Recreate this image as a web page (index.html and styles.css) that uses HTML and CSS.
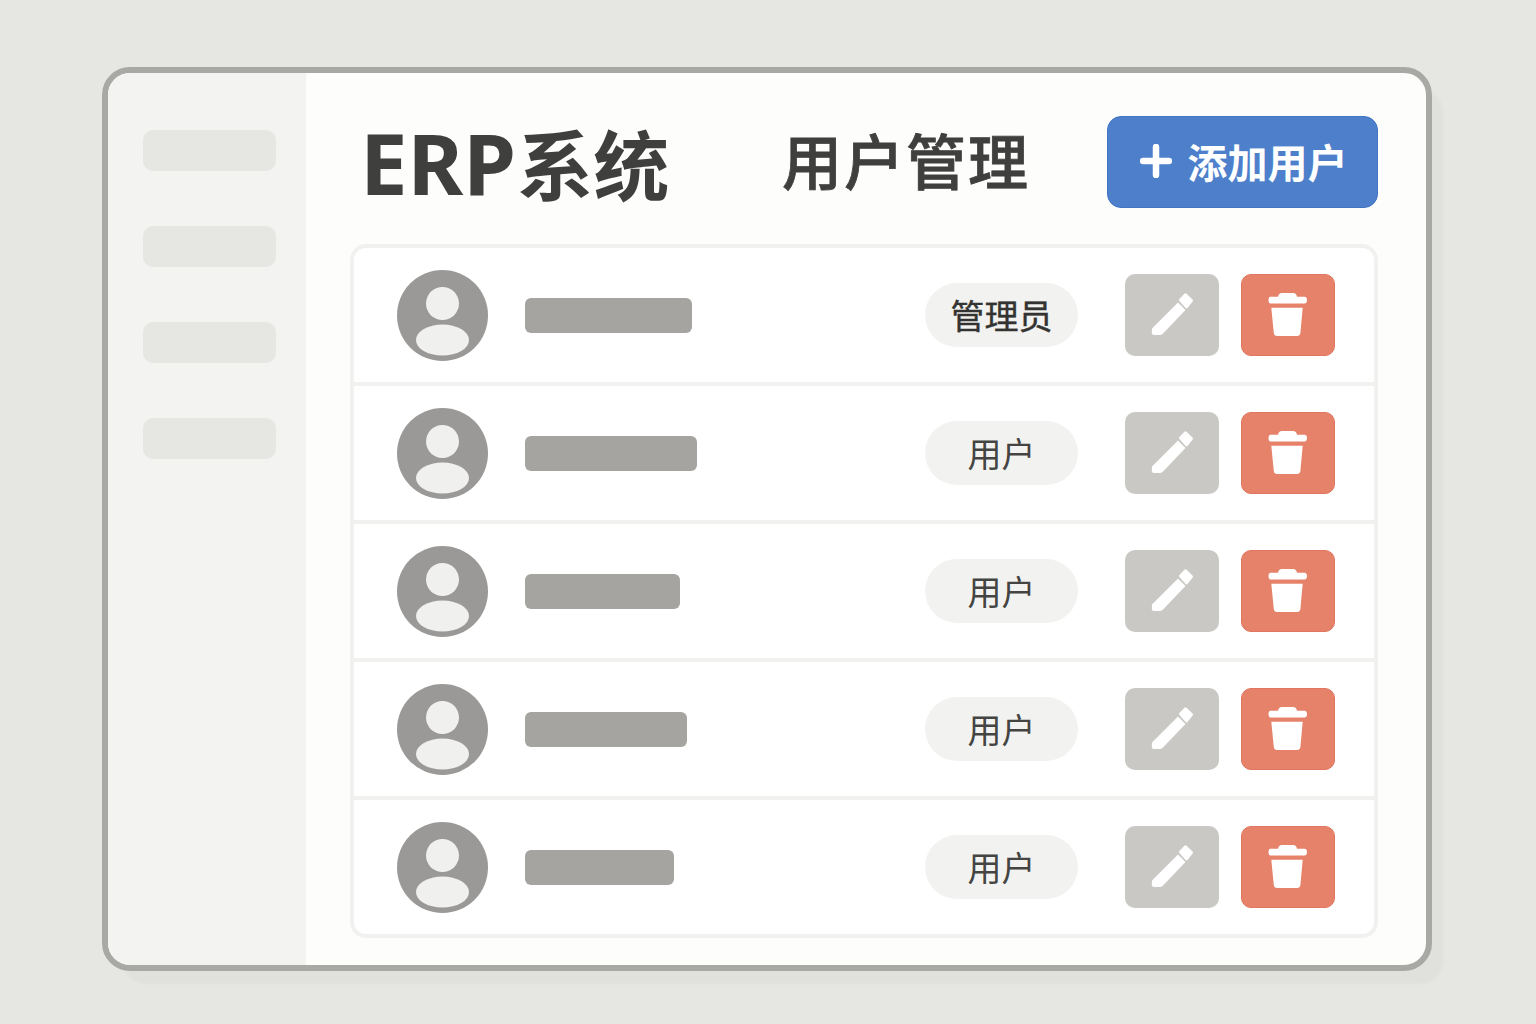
FILE: index.html
```html
<!DOCTYPE html>
<html lang="zh-CN">
<head>
    <meta charset="UTF-8">
    <meta name="viewport" content="width=device-width, initial-scale=1.0">
    <title>ERP系统 用户管理</title>
    <link rel="stylesheet" href="styles.css">
</head>
<body>

    <svg class="sprite" xmlns="http://www.w3.org/2000/svg">
        <symbol id="icon-avatar" viewBox="0 0 91 91">
            <circle cx="45.5" cy="45.5" r="45.5" fill="#9a9997"/>
            <circle cx="45.5" cy="33.5" r="16.5" fill="#f0f0ee"/>
            <ellipse cx="45.5" cy="70" rx="26.5" ry="15.5" fill="#f0f0ee"/>
        </symbol>
        <symbol id="icon-pencil" viewBox="0 0 48 48">
            <path d="M4 37.5 L30 11.5 L37.5 19 L15.5 42 Q14 43.8 12 44 L6 44 Q3.8 44 3.8 42 Z" fill="#fff"/>
            <path d="M32.5 9 L37.5 3.8 L43.5 9.5 L38.5 15.8 Z" fill="#fff" stroke="#fff" stroke-width="3" stroke-linejoin="round"/>
        </symbol>
        <symbol id="icon-trash" viewBox="0 0 48 48">
            <path d="M14 5.8 Q14.5 2 18 2 L29 2 Q32.5 2 33 5.8 L40.5 5.8 Q43 6 43 9 Q43 12.4 40.5 12.4 L6.5 12.4 Q4.5 12.4 4.5 9 Q4.5 6 6.5 5.8 Z" fill="#fff"/>
            <path d="M7.3 16.7 L38.7 16.7 L36.4 42 Q36 45 33 45 L13 45 Q10.2 45 9.8 42 Z" fill="#fff"/>
        </symbol>
    </svg>

    <div class="window">
        <aside class="sidebar">
            <div class="nav-item"></div>
            <div class="nav-item"></div>
            <div class="nav-item"></div>
            <div class="nav-item"></div>
        </aside>

        <main class="content">
            <header class="topbar">
                <h1 class="app-title"><span class="app-latin">ERP</span>系统</h1>
                <h2 class="page-title">用户管理</h2>
                <button class="add-btn">
                    <svg class="plus" viewBox="0 0 32 34"><path d="M16 3 V31 M3 17 H29" stroke="#fff" stroke-width="6.5" stroke-linecap="round"/></svg>
                    <span>添加用户</span>
                </button>
            </header>

            <section class="user-list">
                <div class="user-row">
                    <svg class="avatar"><use href="#icon-avatar"/></svg>
                    <div class="user-name" style="width: 167px"></div>
                    <span class="role role-admin">管理员</span>
                    <button class="icon-btn edit"><svg><use href="#icon-pencil"/></svg></button>
                    <button class="icon-btn del"><svg><use href="#icon-trash"/></svg></button>
                </div>
                <div class="user-row">
                    <svg class="avatar"><use href="#icon-avatar"/></svg>
                    <div class="user-name" style="width: 172px"></div>
                    <span class="role">用户</span>
                    <button class="icon-btn edit"><svg><use href="#icon-pencil"/></svg></button>
                    <button class="icon-btn del"><svg><use href="#icon-trash"/></svg></button>
                </div>
                <div class="user-row">
                    <svg class="avatar"><use href="#icon-avatar"/></svg>
                    <div class="user-name" style="width: 155px"></div>
                    <span class="role">用户</span>
                    <button class="icon-btn edit"><svg><use href="#icon-pencil"/></svg></button>
                    <button class="icon-btn del"><svg><use href="#icon-trash"/></svg></button>
                </div>
                <div class="user-row">
                    <svg class="avatar"><use href="#icon-avatar"/></svg>
                    <div class="user-name" style="width: 162px"></div>
                    <span class="role">用户</span>
                    <button class="icon-btn edit"><svg><use href="#icon-pencil"/></svg></button>
                    <button class="icon-btn del"><svg><use href="#icon-trash"/></svg></button>
                </div>
                <div class="user-row">
                    <svg class="avatar"><use href="#icon-avatar"/></svg>
                    <div class="user-name" style="width: 149px"></div>
                    <span class="role">用户</span>
                    <button class="icon-btn edit"><svg><use href="#icon-pencil"/></svg></button>
                    <button class="icon-btn del"><svg><use href="#icon-trash"/></svg></button>
                </div>
            </section>
        </main>
    </div>

</body>
</html>
```

FILE: styles.css
```css
* {
    box-sizing: border-box;
}

html, body {
    height: 100%;
}

body {
    margin: 0;
    padding: 67px 0 0 102px;
    overflow: hidden;
    background-color: #e6e6e3;
    font-family: "Noto Sans", "Noto Sans CJK SC", sans-serif;
}

.sprite {
    display: none;
}

.window {
    display: flex;
    width: 1330px;
    height: 904px;
    border: 6px solid #a8a8a5;
    border-radius: 28px;
    overflow: hidden;
    background-color: #fdfdfb;
    box-shadow: 16px 18px 3px -5px #e0e0dc;
}

.sidebar {
    width: 198px;
    flex-shrink: 0;
    padding: 57px 30px 0 35px;
    background-color: #f3f4f2;
}

.nav-item {
    height: 41px;
    margin-bottom: 55px;
    border-radius: 10px;
    background-color: #e6e6e3;
}

.content {
    flex: 1;
    padding: 43px 48px 0 44px;
}

.topbar {
    display: flex;
    align-items: center;
    height: 92px;
    padding-left: 14px;
    margin-bottom: 36px;
}

.app-title {
    width: 420px;
    margin: 0;
    font-size: 76px;
    font-weight: 700;
    line-height: 1;
    color: #3f3f3d;
}

.app-latin {
    margin-left: -4px;
    margin-right: 1px;
    font-size: 85px;
}

.page-title {
    margin: 0 0 0 -2px;
    font-size: 60px;
    font-weight: 500;
    letter-spacing: 2px;
    line-height: 1;
    color: #3f3f3d;
    -webkit-text-stroke: 0.8px #3f3f3d;
}

.add-btn {
    display: flex;
    align-items: center;
    justify-content: center;
    gap: 16px;
    width: 271px;
    height: 92px;
    margin-left: auto;
    padding: 0 0 2px 2px;
    border: 1px solid #4175c4;
    border-radius: 14px;
    background-color: #4d7fcb;
    color: #fff;
    font-family: inherit;
    font-size: 40px;
    font-weight: 700;
}

.plus {
    width: 32px;
    height: 34px;
}

.user-list {
    height: 694px;
    border: 4px solid #f1f1ef;
    border-radius: 16px;
    overflow: hidden;
    background-color: #f1f1ef;
}

.user-row {
    display: flex;
    align-items: center;
    height: 134px;
    margin-bottom: 4px;
    padding: 0 39px 0 43px;
    background-color: #fff;
}

.user-row:last-child {
    margin-bottom: 0;
}

.avatar {
    width: 91px;
    height: 91px;
    flex-shrink: 0;
}

.user-name {
    height: 35px;
    margin-left: 37px;
    border-radius: 6px;
    background-color: #a5a4a1;
}

.role {
    display: flex;
    align-items: center;
    justify-content: center;
    width: 153px;
    height: 64px;
    margin-left: auto;
    margin-right: 47px;
    padding-bottom: 2px;
    border-radius: 32px;
    background-color: #f2f2f0;
    font-size: 34px;
    color: #444442;
}

.role-admin {
    color: #333331;
    -webkit-text-stroke: 0.4px #333331;
}

.icon-btn {
    display: flex;
    align-items: center;
    justify-content: center;
    width: 94px;
    height: 82px;
    padding: 0;
    border: none;
    border-radius: 10px;
}

.icon-btn svg {
    width: 48px;
    height: 48px;
}

.edit {
    background-color: #c9c8c4;
    margin-right: 22px;
}

.del {
    border: 1px solid #e07560;
    background-color: #e7826a;
}
```
